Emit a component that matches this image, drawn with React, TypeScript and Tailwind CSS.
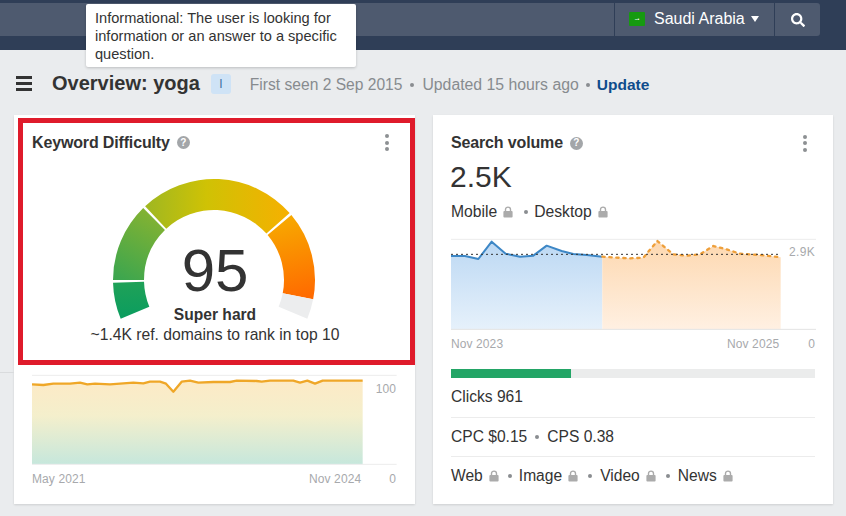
import { FaSearch } from "react-icons/fa";

const polar = (deg: number, r: number) => {
  const a = (deg * Math.PI) / 180;
  return [214 + r * Math.cos(a), 279 - r * Math.sin(a)];
};
const wedge = (a: number, b: number, r0 = 70, r1 = 101) => {
  const [x1, y1] = polar(a, r1);
  const [x2, y2] = polar(b, r1);
  const [x3, y3] = polar(b, r0);
  const [x4, y4] = polar(a, r0);
  return `M${x1} ${y1}A${r1} ${r1} 0 0 1 ${x2} ${y2}L${x3} ${y3}A${r0} ${r0} 0 0 0 ${x4} ${y4}Z`;
};

function Gauge() {
  return (
    <svg width="220" height="150" viewBox="104 172 220 150" className="block">
      <defs>
        <linearGradient id="g1" gradientUnits="userSpaceOnUse" x1="130" y1="318" x2="130" y2="282">
          <stop offset="0" stopColor="#0a9d5f" />
          <stop offset="1" stopColor="#1fa158" />
        </linearGradient>
        <linearGradient id="g2" gradientUnits="userSpaceOnUse" x1="125" y1="280" x2="165" y2="208">
          <stop offset="0" stopColor="#3da64e" />
          <stop offset="1" stopColor="#8db42e" />
        </linearGradient>
        <linearGradient id="g3" gradientUnits="userSpaceOnUse" x1="150" y1="210" x2="290" y2="210">
          <stop offset="0" stopColor="#a2b81f" />
          <stop offset="0.4" stopColor="#cfc205" />
          <stop offset="1" stopColor="#f6b000" />
        </linearGradient>
        <linearGradient id="g4" gradientUnits="userSpaceOnUse" x1="280" y1="216" x2="300" y2="298">
          <stop offset="0" stopColor="#f7aa00" />
          <stop offset="1" stopColor="#ff6a00" />
        </linearGradient>
      </defs>
      <path d={wedge(202.5, 181.5)} fill="url(#g1)" />
      <path d={wedge(180, 134.5)} fill="url(#g2)" />
      <path d={wedge(133, 41.5)} fill="url(#g3)" />
      <path d={wedge(40, -11)} fill="url(#g4)" />
      <path d={wedge(-11, -22.5)} fill="#ecedee" />
    </svg>
  );
}

function Help() {
  return (
    <span className="ml-[7px] flex h-[13px] w-[13px] items-center justify-center rounded-full bg-[#a3a6a9] text-[10px] leading-none font-bold text-white">
      ?
    </span>
  );
}

function Dots() {
  return (
    <span className="flex flex-col gap-[2.5px]">
      <span className="h-[4px] w-[4px] rounded-full bg-[#8d9093]" />
      <span className="h-[4px] w-[4px] rounded-full bg-[#8d9093]" />
      <span className="h-[4px] w-[4px] rounded-full bg-[#8d9093]" />
    </span>
  );
}

function Lock() {
  return (
    <svg width="10" height="12" viewBox="0 0 10 12" className="ml-[6px] inline-block">
      <path d="M2.5 6V3.6a2.5 2.5 0 0 1 5 0V6" fill="none" stroke="#ababab" strokeWidth="1.4" />
      <rect x="0.4" y="5" width="9.2" height="6.6" rx="1" fill="#ababab" />
    </svg>
  );
}

function Dot({ className = "mx-[8px]" }: { className?: string }) {
  return <span className={`${className} h-[4px] w-[4px] rounded-full bg-[#8a8d90]`} />;
}

function VolumeChart() {
  const blue = "33,93 75,93 115,102 155,50 197,86 240,95 280,92 320,62 365,78 400,87 440,90 487,95";
  const orange = "487,95 530,98 570,100 610,98 652,48 700,88 740,92 780,88 820,63 860,73 900,86 960,90 1022,97";
  return (
    <svg width="400" height="96" viewBox="0 30 1200 288" className="block">
      <defs>
        <linearGradient id="vb" x1="0" y1="0" x2="0" y2="1">
          <stop offset="0" stopColor="#bcd8f3" />
          <stop offset="1" stopColor="#e6f1fb" />
        </linearGradient>
        <linearGradient id="vo" x1="0" y1="0" x2="0" y2="1">
          <stop offset="0" stopColor="#fdd8b0" />
          <stop offset="1" stopColor="#fff0e2" />
        </linearGradient>
      </defs>
      <line x1="33" x2="1128" y1="43" y2="43" stroke="#ececec" strokeWidth="3" />
      <polygon points={`${blue} 487,313 33,313`} fill="url(#vb)" />
      <polygon points={`${orange} 1022,313 487,313`} fill="url(#vo)" />
      <line x1="33" x2="1128" y1="313" y2="313" stroke="#e3e3e3" strokeWidth="3" />
      <polyline points={blue} fill="none" stroke="#3d87c6" strokeWidth="6" strokeLinejoin="round" />
      <polyline points={orange} fill="none" stroke="#ee9f3a" strokeWidth="7" strokeDasharray="7 14" strokeLinecap="round" />
      <line x1="33" x2="1022" y1="88" y2="88" stroke="#333" strokeWidth="3" strokeDasharray="6 9" />
    </svg>
  );
}

function DifficultyChart() {
  const pts =
    "96,73 130,75 160,71 210,71 240,68 262,73 285,71 330,73 400,68 430,70 450,65 480,65 498,71 520,95 545,65 570,62 595,68 640,66 690,66 710,62 770,63 785,65 810,62 880,62 900,68 922,62 945,71 968,62 1088,62";
  return (
    <svg width="430" height="96" viewBox="0 30 1290 288" className="block">
      <defs>
        <linearGradient id="kd" x1="0" y1="0" x2="0" y2="1">
          <stop offset="0" stopColor="#fdeac6" />
          <stop offset="0.42" stopColor="#f4efcc" />
          <stop offset="1" stopColor="#c6e7dc" />
        </linearGradient>
      </defs>
      <line x1="96" x2="1190" y1="46" y2="46" stroke="#ececec" strokeWidth="3" />
      <polygon points={`${pts} 1088,313 96,313`} fill="url(#kd)" />
      <line x1="96" x2="1190" y1="313" y2="313" stroke="#ececec" strokeWidth="3" />
      <polyline points={pts} fill="none" stroke="#efa728" strokeWidth="7" strokeLinejoin="round" />
    </svg>
  );
}

export default function App() {
  return (
    <div className="relative h-[516px] w-[846px] overflow-hidden bg-[#eaecee] font-['Liberation_Sans',Arial,sans-serif] text-[#333]">
      <header className="h-[50px] bg-[#2f3e57] pt-[3px]">
        <div className="flex h-[33px] w-[820px] justify-end rounded-r-[3px] bg-[#4e5a6f] text-white">
          <div className="flex w-[160px] items-center border-l border-[#2f3e57] pb-[1px] pl-[14px]">
            <span className="flex h-[14px] w-[16px] items-center justify-center rounded-[1px] bg-[#169a10] text-[5px] leading-none text-white">
              ~•
            </span>
            <span className="ml-[9px] text-[16px]">Saudi Arabia</span>
            <span className="ml-[6px] h-0 w-0 border-x-[4.5px] border-t-[6px] border-x-transparent border-t-white" />
          </div>
          <div className="flex w-[46px] items-center justify-center border-l border-[#2f3e57]">
            <FaSearch size={14} />
          </div>
        </div>
      </header>

      <div className="absolute top-[4px] left-[86px] h-[63px] w-[270px] rounded-[2px] bg-white pt-[5px] pl-[9px] text-[14.6px] leading-[18px] text-[#333] shadow-[0_1px_3px_rgba(0,0,0,0.2)]">
        Informational: The user is looking for information or an answer to a specific question.
      </div>

      <div className="flex h-[65px] items-center pt-[1px] pl-[16px]">
        <span className="flex w-[16px] flex-col gap-[3px]">
          <span className="h-[3px] bg-[#333]" />
          <span className="h-[3px] bg-[#333]" />
          <span className="h-[3px] bg-[#333]" />
        </span>
        <h1 className="ml-[20px] text-[20px] font-bold">Overview: yoga</h1>
        <span className="mt-[2px] ml-[11px] flex h-[20px] w-[20px] items-center justify-center rounded-[3px] bg-[#cfe3f6] text-[12px] text-[#3f6fa0]">
          I
        </span>
        <span className="mt-[4px] ml-[19px] text-[15.6px] text-[#878b8f]">First seen 2 Sep 2015</span>
        <Dot className="mx-[8px] mt-[4px]" />
        <span className="mt-[4px] text-[15.8px] text-[#878b8f]">Updated 15 hours ago</span>
        <Dot className="mx-[7px] mt-[4px]" />
        <span className="mt-[4px] text-[15.5px] font-bold text-[#0f4c8c]">Update</span>
      </div>

      <main className="flex items-start gap-[18px] pl-[14px]">
        <section className="h-[389px] w-[401px] bg-white pt-[3px] pl-[4px] shadow-[0_1px_2px_rgba(0,0,0,0.12)]">
          <div className="h-[247px] border-[5px] border-[#df1b2b]">
            <div className="flex h-[30px] items-center justify-between pt-[9px] pr-[21px] pl-[9px]">
              <div className="flex items-center">
                <span className="text-[16px] font-bold tracking-[-0.15px]">Keyword Difficulty</span>
                <Help />
              </div>
              <Dots />
            </div>
            <div className="relative flex flex-col items-center pt-[20px] pr-[5px]">
              <Gauge />
              <div className="absolute top-[83px] left-0 flex w-full flex-col items-center pr-[3px]">
                <span className="text-[60px] leading-[70px]">95</span>
                <span className="-mt-[1px] text-[15.6px] leading-[20px] font-bold">Super hard</span>
                <span className="text-[15.7px] leading-[20px]">~1.4K ref. domains to rank in top 10</span>
              </div>
            </div>
          </div>
          <div className="relative -ml-[18px] pt-[5px]">
            <DifficultyChart />
            <span className="absolute top-[15px] right-[19px] text-[12px] tracking-[0.1px] text-[#a7a9ac]">100</span>
            <div className="flex pt-[4px] pr-[19px] pl-[32px] text-[12px] tracking-[0.1px] text-[#a7a9ac]">
              <span>May 2021</span>
              <span className="ml-auto">Nov 2024</span>
              <span className="ml-[28px]">0</span>
            </div>
          </div>
        </section>

        <section className="h-[389px] w-[400px] bg-white shadow-[0_1px_2px_rgba(0,0,0,0.12)]">
          <div className="flex items-center justify-between pt-[16px] pr-[26px] pl-[18px]">
            <div className="flex items-center">
              <span className="text-[16px] font-bold tracking-[-0.15px]">Search volume</span>
              <Help />
            </div>
            <Dots />
          </div>
          <div className="mt-[4px] pl-[17px] text-[30px] leading-[36px]">2.5K</div>
          <div className="mt-[5px] flex items-center pl-[18px] text-[15.7px] leading-[24px]">
            Mobile
            <Lock />
            <Dot className="mr-[6px] ml-[11px]" />
            Desktop
            <Lock />
          </div>
          <div className="relative mt-[11px] w-[400px] pl-[7px]">
            <VolumeChart />
            <span className="absolute top-[8px] right-[18px] text-[12px] tracking-[0.3px] text-[#a7a9ac]">2.9K</span>
          </div>
          <div className="flex pt-[4px] pr-[18px] pl-[18px] text-[12px] tracking-[0.1px] text-[#a7a9ac]">
            <span>Nov 2023</span>
            <span className="ml-auto">Nov 2025</span>
            <span className="ml-[29px]">0</span>
          </div>
          <div className="mx-[18px] mt-[16px] h-[9px] bg-[#ebecec]">
            <div className="h-full w-[33%] bg-[#23a566]" />
          </div>
          <div className="mx-[18px] border-b border-[#ececec] pt-[7px] pb-[8px] text-[15.6px] leading-[24px]">Clicks 961</div>
          <div className="mx-[18px] flex items-center border-b border-[#ececec] py-[7px] text-[15.6px] leading-[24px]">
            CPC $0.15
            <Dot />
            CPS 0.38
          </div>
          <div className="mx-[18px] flex items-center py-[7px] text-[15.6px] leading-[24px]">
            Web
            <Lock />
            <Dot className="mr-[7px] ml-[9px]" />
            Image
            <Lock />
            <Dot className="mr-[8px] ml-[10px]" />
            Video
            <Lock />
            <Dot className="mr-[8px] ml-[10px]" />
            News
            <Lock />
          </div>
        </section>
      </main>
      <div className="absolute top-[372px] left-0 h-px w-[14px] bg-[#d9dbdd]" />
    </div>
  );
}
